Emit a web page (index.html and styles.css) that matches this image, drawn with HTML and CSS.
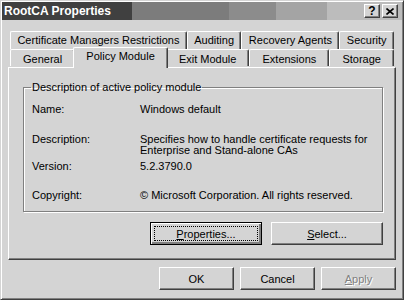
FILE: index.html
```html
<!DOCTYPE html>
<html lang="en">
<head>
    <meta charset="UTF-8">
    <title>RootCA Properties</title>
    <link rel="stylesheet" href="styles.css">
</head>
<body>

    <div class="window">
        <div class="titlebar">
            <span class="title">RootCA Properties</span>
            <div class="caption-buttons">
                <div class="caption-btn">?</div>
                <div class="caption-btn">
                    <svg width="8" height="7" viewBox="0 0 8 7"><path d="M0.5 0.5 L7.5 6.5 M7.5 0.5 L0.5 6.5" stroke="#000" stroke-width="1.6"/></svg>
                </div>
            </div>
        </div>

        <div class="content">
            <div class="tabs">
                <div class="tab-row">
                    <div class="tab">Certificate Managers Restrictions</div>
                    <div class="tab">Auditing</div>
                    <div class="tab">Recovery Agents</div>
                    <div class="tab">Security</div>
                </div>
                <div class="tab-row">
                    <div class="tab">General</div>
                    <div class="tab active">Policy Module</div>
                    <div class="tab">Exit Module</div>
                    <div class="tab">Extensions</div>
                    <div class="tab">Storage</div>
                </div>
            </div>

            <div class="panel">
                <fieldset class="group">
                    <legend>Description of active policy module</legend>
                    <div class="info">
                        <div>Name:</div>
                        <div>Windows default</div>
                        <div>Description:</div>
                        <div>Specifies how to handle certificate requests for Enterprise and Stand-alone CAs</div>
                        <div>Version:</div>
                        <div>5.2.3790.0</div>
                        <div>Copyright:</div>
                        <div>&copy; Microsoft Corporation. All rights reserved.</div>
                    </div>
                </fieldset>
                <div class="panel-buttons">
                    <div class="btn wide default"><span><u>P</u>roperties...</span></div>
                    <div class="btn wide"><span><u>S</u>elect...</span></div>
                </div>
            </div>

            <div class="footer">
                <div class="btn">OK</div>
                <div class="btn">Cancel</div>
                <div class="btn disabled"><span><u>A</u>pply</span></div>
            </div>
        </div>
    </div>

</body>
</html>
```

FILE: styles.css
```css
body {
    margin: 0;
    padding: 0;
    font-family: "Liberation Sans", Arial, sans-serif;
    font-size: 11px;
    color: #000;
    background: #d4d4d4;
}
.window {
    box-sizing: border-box;
    width: 404px;
    height: 300px;
    background: #d4d4d4;
    border: 1px solid;
    border-color: #d4d4d4 #404040 #404040 #d4d4d4;
    box-shadow: inset 1px 1px #fff, inset -1px -1px #808080;
    padding: 1px;
}
.titlebar {
    height: 18px;
    display: flex;
    align-items: center;
    justify-content: space-between;
    background: linear-gradient(to right, #404040 0 130px, #7c7c7c 130px 227px, #8c8c8c 227px 274px, #a4a4a4 274px 325px, #bcbcbc 325px);
}
.title {
    color: #fff;
    font-weight: bold;
    font-size: 12px;
    padding-left: 2px;
}
.caption-buttons {
    display: flex;
    gap: 2px;
    margin-right: 4px;
}
.caption-btn {
    box-sizing: border-box;
    width: 16px;
    height: 14px;
    background: #d4d4d4;
    border: 1px solid;
    border-color: #fff #404040 #404040 #fff;
    box-shadow: inset -1px -1px #808080;
    display: flex;
    align-items: center;
    justify-content: center;
    font-weight: bold;
    font-size: 12px;
    line-height: 12px;
}
.content {
    padding: 11px 6px 0;
}
.tabs {
    margin: 0 2px;
}
.tab-row {
    display: flex;
}
.tab {
    flex: 1 1 auto;
    box-sizing: border-box;
    height: 18px;
    line-height: 17px;
    text-align: center;
    white-space: nowrap;
    background: #d4d4d4;
    border-top: 1px solid #fff;
    border-left: 1px solid #fff;
    border-right: 1px solid #404040;
    box-shadow: inset -1px 0 #808080;
    border-radius: 2px 2px 0 0;
}
.tab-row + .tab-row .tab {
    height: 17px;
    line-height: 18px;
}
.tab-row + .tab-row .tab.active {
    position: relative;
    z-index: 1;
    height: 21px;
    line-height: 17px;
    margin: -2px -2px -1px;
}
.panel {
    border: 1px solid;
    border-color: #fff #404040 #404040 #fff;
    box-shadow: inset -1px -1px #808080;
    padding: 13px 12px 14px 14px;
}
.group {
    margin: 0;
    padding: 10px 8px 10px;
    border: 1px solid #808080;
    box-shadow: inset 1px 1px #fff, 1px 1px #fff;
}
.group legend {
    padding: 0 1px;
    margin-left: -1px;
    line-height: 13px;
}
.info {
    display: grid;
    grid-template-columns: 108px 1fr;
    grid-template-rows: 30px 27px 29px 11px;
    line-height: 11px;
}
.panel-buttons {
    display: flex;
    justify-content: flex-end;
    gap: 9px;
    margin-top: 10px;
}
.btn {
    box-sizing: border-box;
    width: 75px;
    height: 23px;
    display: flex;
    align-items: center;
    justify-content: center;
    background: #d4d4d4;
    border: 1px solid;
    border-color: #fff #404040 #404040 #fff;
    box-shadow: inset -1px -1px #808080;
}
.btn.wide {
    width: 112px;
}
.btn.default {
    border: 1px solid #000;
    box-shadow: inset 1px 1px #fff, inset -2px -2px #808080;
    outline: 1px dotted #000;
    outline-offset: -5px;
}
.btn.disabled {
    color: #808080;
    text-shadow: 1px 1px #fff;
}
.footer {
    display: flex;
    justify-content: flex-end;
    gap: 6px;
    margin-top: 7px;
}
```
